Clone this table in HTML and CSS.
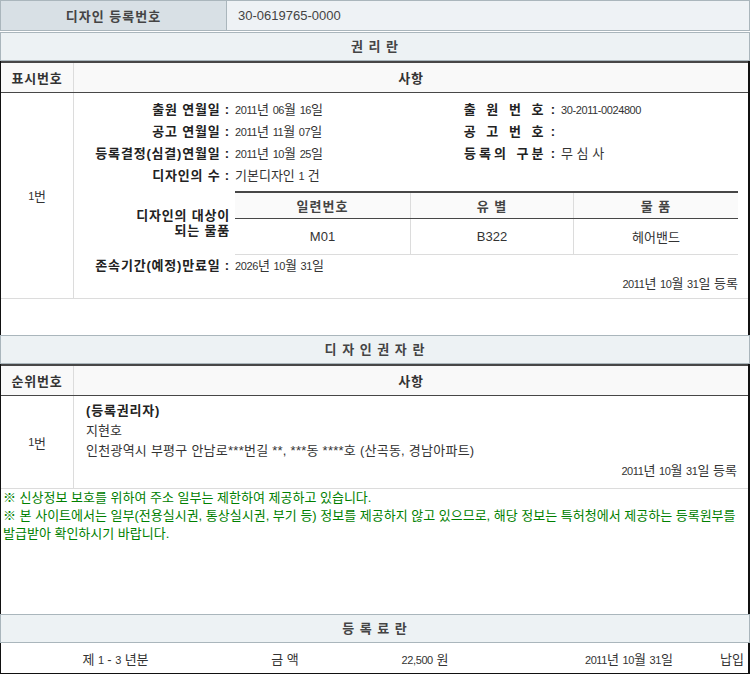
FILE: index.html
```html
<!DOCTYPE html>
<html lang="ko">
<head>
<meta charset="utf-8">
<title>디자인 등록원부</title>
<link rel="stylesheet" href="styles.css">
</head>
<body>
<div class="page">
  <div class="reg-row">
    <div class="reg-label">디자인 등록번호</div>
    <div class="reg-value">30-0619765-0000</div>
  </div>

  <div class="sec-title first">권 리 란</div>
  <div class="framed">
    <div class="tbl">
      <div class="thead">
        <div class="col-num">표시번호</div>
        <div class="col-body">사항</div>
      </div>
      <div class="trow rights">
        <div class="col-num"><span class="n">1</span>번</div>
        <div class="col-body">
          <div class="info">
            <div class="lb">출원 연월일 :</div>
            <div class="vl"><span class="n">2011</span>년 <span class="n">06</span>월 <span class="n">16</span>일</div>
            <div class="lb"><span class="k">출 원 번 호</span> :</div>
            <div class="vl"><span class="n">30-2011-0024800</span></div>

            <div class="lb">공고 연월일 :</div>
            <div class="vl"><span class="n">2011</span>년 <span class="n">11</span>월 <span class="n">07</span>일</div>
            <div class="lb"><span class="k">공 고 번 호</span> :</div>
            <div class="vl"></div>

            <div class="lb">등록결정(심결)연월일 :</div>
            <div class="vl"><span class="n">2011</span>년 <span class="n">10</span>월 <span class="n">25</span>일</div>
            <div class="lb"><span class="k">등록의 구분</span> :</div>
            <div class="vl">무 심 사</div>

            <div class="lb">디자인의 수 :</div>
            <div class="vl span3">기본디자인 <span class="n">1</span> 건</div>

            <div class="lb goods-lb">디자인의 대상이<br>되는 물품</div>
            <div class="goods">
              <div class="goods-head">
                <div class="gc">일련번호</div>
                <div class="gc">유 별</div>
                <div class="gc">물 품</div>
              </div>
              <div class="goods-row">
                <div class="gc">M01</div>
                <div class="gc">B322</div>
                <div class="gc">헤어밴드</div>
              </div>
            </div>

            <div class="lb term-lb">존속기간(예정)만료일 :</div>
            <div class="vl span3 term-vl"><span class="n">2026</span>년 <span class="n">10</span>월 <span class="n">31</span>일</div>

            <div class="reg-date"><span class="n">2011</span>년 <span class="n">10</span>월 <span class="n">31</span>일 등록</div>
          </div>
        </div>
      </div>
    </div>
    <div class="spacer s1"></div>
  </div>

  <div class="sec-title">디 자 인 권 자 란</div>
  <div class="framed">
    <div class="tbl">
      <div class="thead">
        <div class="col-num">순위번호</div>
        <div class="col-body">사항</div>
      </div>
      <div class="trow owner">
        <div class="col-num"><span class="n">1</span>번</div>
        <div class="col-body owner-body">
          <div class="ln bold">(등록권리자)</div>
          <div class="ln">지현호</div>
          <div class="ln addr">인천광역시 부평구 안남로***번길 **, ***동 ****호 (산곡동, 경남아파트)</div>
          <div class="ln right"><span class="n">2011</span>년 <span class="n">10</span>월 <span class="n">31</span>일 등록</div>
        </div>
      </div>
    </div>
    <div class="notes">
      <p>※ 신상정보 보호를 위하여 주소 일부는 제한하여 제공하고 있습니다.</p>
      <p>※ 본 사이트에서는 일부(전용실시권, 통상실시권, 부기 등) 정보를 제공하지 않고 있으므로, 해당 정보는 특허청에서 제공하는 등록원부를<br>발급받아 확인하시기 바랍니다.</p>
    </div>
    <div class="spacer s2"></div>
  </div>

  <div class="sec-title">등 록 료 란</div>
  <div class="framed last">
    <div class="fee-row">
      <div class="fc c1">제 <span class="n">1</span> - <span class="n">3</span> 년분</div>
      <div class="fc c2">금 액</div>
      <div class="fc c3"><span class="n">22,500</span> 원</div>
      <div class="fc c4"><span class="n">2011</span>년 <span class="n">10</span>월 <span class="n">31</span>일</div>
      <div class="fc c5">납입</div>
    </div>
  </div>
</div>
</body>
</html>
```
FILE: styles.css
```css
* { box-sizing: border-box; }

html, body {
  margin: 0;
  padding: 0;
  background: #fff;
}

body {
  font-family: "Liberation Sans", "Noto Sans CJK KR", sans-serif;
  font-size: 13px;
  color: #333;
}

.page {
  width: 750px;
}

/* narrow bitmap-like digits */
.n {
  font-size: 11px;
  letter-spacing: -0.4px;
}

/* top registration number row */
.reg-row {
  display: flex;
  height: 31px;
  border: 1px solid #aab6bc;
}
.reg-label {
  width: 226px;
  background: #d8e0e5;
  border-right: 1px solid #aab6bc;
  display: flex;
  align-items: center;
  justify-content: center;
  font-weight: bold;
  letter-spacing: 1px;
  color: #444;
}
.reg-value {
  flex: 1;
  background: #eef2f5;
  display: flex;
  align-items: center;
  padding-left: 11px;
  color: #444;
}

/* section titles */
.sec-title {
  height: 29px;
  border: 1px solid #aab6bc;
  background: #edf2f4;
  text-align: center;
  line-height: 27px;
  font-weight: bold;
  letter-spacing: 1px;
  color: #444;
}
.sec-title.first { margin-top: 1px; }

/* black frame */
.framed {
  border-left: 1px solid #111;
  border-right: 2px solid #111;
}
.framed.last {
  border-bottom: 1px solid #111;
}

/* tables */
.tbl {
  border-top: 2px solid #474747;
}
.thead {
  display: flex;
  height: 30px;
  background: #f9f9f9;
  border-bottom: 1px solid #474747;
  font-weight: bold;
  letter-spacing: 0.8px;
  color: #333;
}
.thead .col-num,
.thead .col-body {
  display: flex;
  align-items: center;
  justify-content: center;
}
.col-num {
  width: 73px;
  border-right: 1px solid #dcdcdc;
  flex: none;
}
.col-body {
  flex: 1;
  min-width: 0;
}
.trow {
  display: flex;
  border-bottom: 1px solid #dcdcdc;
}
.trow .col-num {
  display: flex;
  align-items: center;
  justify-content: center;
}
.trow.rights { height: 206px; }
.trow.owner { height: 93px; }

/* rights info grid */
.info {
  display: grid;
  grid-template-columns: 161px 225px 101px 1fr;
  padding: 6px 10px 0 0;
}
.info .lb {
  text-align: right;
  padding-right: 5px;
  font-weight: bold;
  letter-spacing: 0.8px;
  color: #222;
  line-height: 21px;
  white-space: nowrap;
}
.info .lb .k {
  letter-spacing: 3px;
  word-spacing: 1px;
}
.info .vl {
  line-height: 21px;
  white-space: nowrap;
}
.info .span3 { grid-column: 2 / 5; }

.info .goods-lb {
  line-height: 15px;
  align-self: center;
  margin-top: 4px;
}
.goods {
  grid-column: 2 / 5;
  margin-top: 4px;
  border-top: 2px solid #474747;
  border-bottom: 1px solid #dcdcdc;
}
.goods-head,
.goods-row {
  display: grid;
  grid-template-columns: 175px 163px 1fr;
}
.goods-head {
  height: 26px;
  background: #fafafa;
  border-bottom: 1px solid #474747;
  font-weight: bold;
  letter-spacing: 1px;
  color: #444;
}
.goods-row {
  height: 35px;
}
.gc {
  display: flex;
  align-items: center;
  justify-content: center;
}
.gc + .gc {
  border-left: 1px solid #dcdcdc;
}
.info .term-lb,
.info .term-vl {
  line-height: 19px;
  padding-top: 1px;
}
.reg-date {
  grid-column: 1 / 5;
  text-align: right;
  line-height: 15px;
}

/* owner */
.owner-body {
  padding: 5px 11px 0 12px;
}
.ln {
  line-height: 20px;
  white-space: nowrap;
}
.ln.bold {
  font-weight: bold;
  letter-spacing: 0.8px;
  color: #222;
}
.ln.addr {
  letter-spacing: 0.25px;
}
.ln.right {
  text-align: right;
}

/* notes */
.notes {
  color: #008000;
  padding-left: 2px;
}
.notes p {
  margin: 0;
  line-height: 18px;
  white-space: nowrap;
}

.spacer.s1 { height: 36px; }
.spacer.s2 { height: 71px; }

/* fee row */
.fee-row {
  display: flex;
  height: 30px;
  align-items: center;
}
.fc { flex: none; }
.c1 { width: 229px; text-align: center; }
.c2 { width: 110px; text-align: center; }
.c3 { width: 170px; text-align: center; }
.c4 { width: 210px; text-align: right; padding-right: 47px; }
.c5 { flex: 1; text-align: left; }
```
